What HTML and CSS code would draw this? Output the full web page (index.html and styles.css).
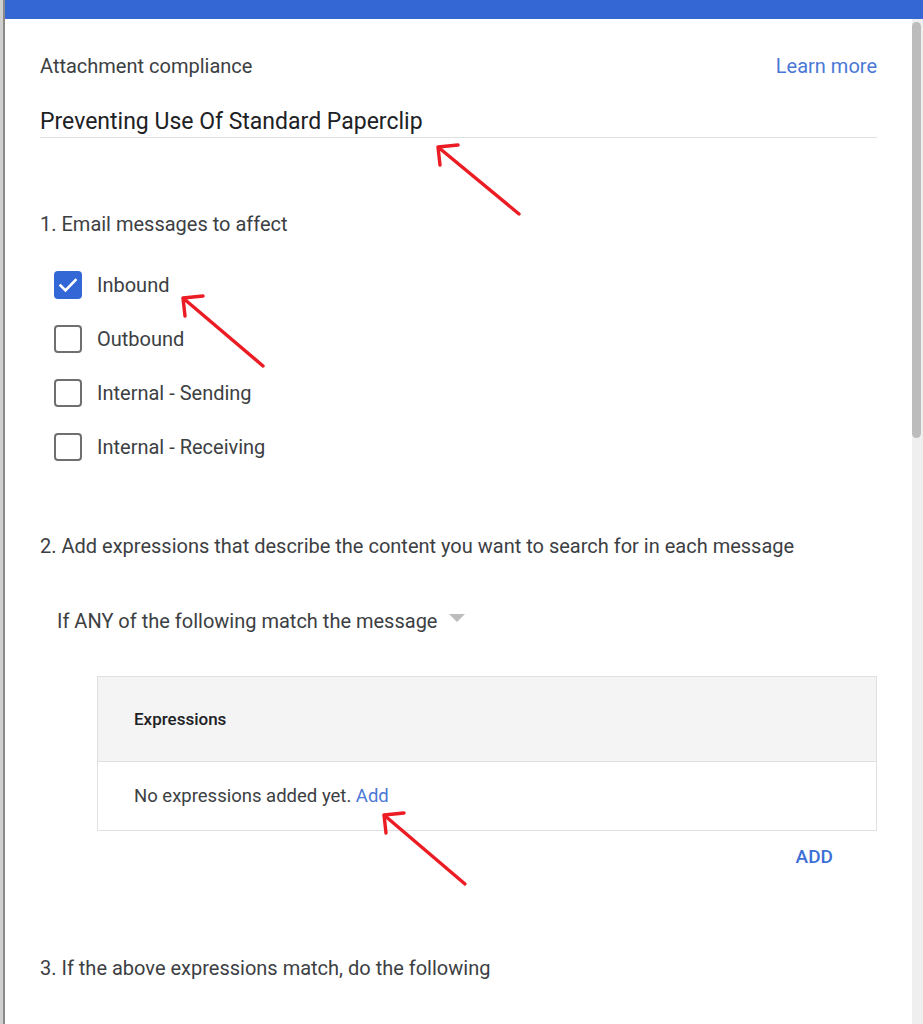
FILE: index.html
```html
<!DOCTYPE html>
<html lang="en">
<head>
<meta charset="utf-8">
<title>Attachment compliance</title>
<link rel="stylesheet" href="styles.css">
</head>
<body>
<div class="frame">
  <div class="edge"></div>
  <div class="window">
    <div class="topbar"></div>
    <div class="body-row">
      <main class="content">
        <div class="head-row">
          <span class="setting-name">Attachment compliance</span>
          <a class="learn" href="#">Learn more</a>
        </div>
        <div class="title-field">Preventing Use Of Standard Paperclip</div>

        <div class="section-label s1">1. Email messages to affect</div>
        <ul class="checks">
          <li class="check-row"><span class="box checked"><svg viewBox="0 0 24 24" width="24" height="24"><path d="M4.5 12.5l5 5L19.5 7" fill="none" stroke="#fff" stroke-width="2.6" stroke-linecap="square"/></svg></span><span class="check-label">Inbound</span></li>
          <li class="check-row"><span class="box"></span><span class="check-label">Outbound</span></li>
          <li class="check-row"><span class="box"></span><span class="check-label">Internal - Sending</span></li>
          <li class="check-row"><span class="box"></span><span class="check-label">Internal - Receiving</span></li>
        </ul>

        <div class="section-label s2">2. Add expressions that describe the content you want to search for in each message</div>
        <div class="dropdown"><span>If ANY of the following match the message</span><span class="caret"></span></div>

        <div class="expr-table">
          <div class="expr-head">Expressions</div>
          <div class="expr-row">No expressions added yet. <a class="inline-link" href="#">Add</a></div>
        </div>
        <div class="add-row"><a class="add-btn" href="#">ADD</a></div>

        <div class="section-label s3">3. If the above expressions match, do the following</div>
      </main>
      <div class="scrollbar"><div class="thumb"></div></div>
    </div>
  </div>
</div>
<svg class="annotations" width="923" height="1024" viewBox="0 0 923 1024">
  <g fill="none" stroke="#ec1c24" stroke-width="3.4" stroke-linecap="round" stroke-linejoin="round">
    <path d="M519 214 L438 147 M438 147 L458 145 M438 147 L440 165"/>
    <path d="M263 366 L183 298 M183 298 L203 296 M183 298 L185 316"/>
    <path d="M465 884 L384 815 M384 815 L404 813 M384 815 L386 833"/>
  </g>
</svg>
</body>
</html>
```

FILE: styles.css
```css
* { box-sizing: border-box; }
html, body { margin: 0; padding: 0; }
body {
  width: 923px;
  height: 1024px;
  overflow: hidden;
  background: #fff;
  font-family: Roboto, "Noto Sans", Arial, sans-serif;
  color: #3c4043;
  position: relative;
}
.frame { display: flex; height: 1024px; }
.edge {
  width: 5px;
  flex: none;
  background: #cfcfcf;
  border-right: 2px solid #8a8a8a;
}
.window { flex: 1; display: flex; flex-direction: column; }
.topbar { height: 19px; background: #3467d4; flex: none; }
.body-row { flex: 1; display: flex; }
.content { flex: 1; padding: 0 35px; }
.scrollbar {
  width: 11px;
  flex: none;
  background: #efefef;
  padding: 3px 2px 0 0;
}
.thumb { height: 416px; background: #bcbcbc; border-radius: 5px; }

.head-row {
  margin-top: 35px;
  display: flex;
  justify-content: space-between;
  align-items: center;
  height: 24px;
  font-size: 20px;
}
.setting-name { color: #3c4043; }
.learn { color: #4a78d6; text-decoration: none; }
.title-field {
  margin-top: 30px;
  font-size: 23px;
  line-height: 28px;
  color: #202124;
  padding-bottom: 1px;
  border-bottom: 1px solid #e0e0e0;
}
.section-label { font-size: 20px; line-height: 24px; color: #3c4043; }
.s1 { margin-top: 74px; }
.s2 { margin-top: 60px; }
.s3 { margin-top: 87px; }

.checks { list-style: none; margin: 22px 0 0; padding: 0 0 0 14px; }
.check-row { height: 54px; display: flex; align-items: center; }
.box {
  width: 28px; height: 28px;
  border: 2.5px solid #6f6f6f;
  border-radius: 4px;
  display: flex; align-items: center; justify-content: center;
  flex: none;
}
.box.checked { background: #3367d6; border-color: #3367d6; }
.check-label { margin-left: 15px; font-size: 20px; color: #3c4043; }

.dropdown {
  margin-top: 51px;
  padding-left: 17px;
  display: flex;
  align-items: center;
  font-size: 20px;
  line-height: 24px;
  color: #3c4043;
}
.caret {
  margin-left: 12px;
  margin-top: -6px;
  width: 0; height: 0;
  border-left: 8px solid transparent;
  border-right: 8px solid transparent;
  border-top: 8px solid #bdbdbd;
}

.expr-table {
  margin: 43px 0 0 57px;
  border: 1px solid #e0e0e0;
}
.expr-head {
  height: 85px;
  background: #f4f4f4;
  border-bottom: 1px solid #e0e0e0;
  display: flex; align-items: center;
  padding-left: 36px;
  font-size: 17px;
  font-weight: 500;
  color: #202124;
}
.expr-row {
  height: 68px;
  display: flex; align-items: center;
  padding-left: 36px;
  font-size: 18.5px;
  color: #3c4043;
  white-space: pre;
}
.inline-link { color: #4a78d6; text-decoration: none; }
.add-row { display: flex; justify-content: flex-end; padding-right: 44px; margin-top: 14px; }
.add-btn { color: #3d6fd6; font-weight: 500; font-size: 19px; text-decoration: none; line-height: 24px; }

.annotations { position: absolute; top: 0; left: 0; pointer-events: none; }
```
